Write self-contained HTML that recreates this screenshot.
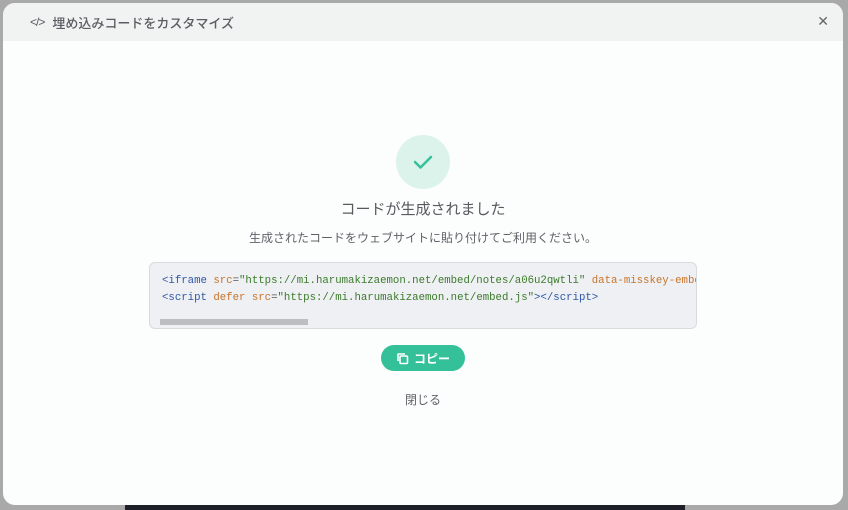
<!DOCTYPE html>
<html><head><meta charset="utf-8"><style>
*{box-sizing:border-box;margin:0;padding:0}
body{width:848px;height:510px;background:#a9a9a9;position:relative;overflow:hidden;font-family:"Liberation Sans","Noto Sans CJK JP",sans-serif}
.darkbar{position:absolute;left:125px;top:500px;width:560px;height:10px;background:#1d2026}
.dlg{position:absolute;left:3px;top:3px;width:840px;height:502px;background:#fcfdfd;border-radius:12px;overflow:hidden}
.hdr{height:38px;background:#f1f2f2;display:flex;align-items:center;padding-left:27px;color:#5a5e63;font-size:13px;font-weight:500}
.hdr .ic{font-size:12px;margin-right:8px;letter-spacing:-1px}
.x{position:absolute;right:14px;top:10px;font-size:14px;color:#666}
.circle{position:absolute;left:393px;top:132px;width:54px;height:54px;border-radius:50%;background:#dcf3ec}
.t1{position:absolute;top:195px;width:100%;text-align:center;font-size:15px;color:#555a5e}
.t2{position:absolute;top:226px;width:100%;text-align:center;font-size:12px;color:#5f6368}
.code{position:absolute;left:146px;top:259px;width:548px;height:67px;background:#eff0f3;border:1px solid #d8dadd;border-radius:6px;overflow:hidden;font-family:"Liberation Mono",monospace;font-size:10.7px;line-height:16.5px;padding:10px 0 0 12px;white-space:nowrap;color:#3b7a2b}
.b{color:#2d57a8}.o{color:#c7742a}.p{color:#555}
.sb{position:absolute;left:10px;bottom:3px;width:148px;height:6px;background:#bdbec1}
.btn{position:absolute;left:378px;top:342px;width:84px;height:26px;border-radius:13px;background:#34c19a;color:#fff;font-size:12px;font-weight:bold;display:flex;align-items:center;justify-content:center;gap:5px}
.close{position:absolute;top:388px;width:100%;text-align:center;font-size:12px;color:#5f6368}
</style></head><body>
<div class="darkbar"></div>
<div class="dlg">
<div class="hdr"><span class="ic">&lt;/&gt;</span>埋め込みコードをカスタマイズ</div>
<div class="x">✕</div>
<div class="circle"><svg width="54" height="54" viewBox="0 0 54 54"><path d="M19 27l5.5 5.5L35 22" stroke="#35c19a" stroke-width="2.5" fill="none" stroke-linecap="round" stroke-linejoin="round"/></svg></div>
<div class="t1">コードが生成されました</div>
<div class="t2">生成されたコードをウェブサイトに貼り付けてご利用ください。</div>
<div class="code"><div><span class="b">&lt;iframe</span> <span class="o">src</span><span class="p">=</span>"https://mi.harumakizaemon.net/embed/notes/a06u2qwtli" <span class="o">data-misskey-embed-id</span></div><div><span class="b">&lt;script</span> <span class="o">defer</span> <span class="o">src</span><span class="p">=</span>"https://mi.harumakizaemon.net/embed.js"<span class="b">&gt;&lt;/script&gt;</span></div><div class="sb"></div></div>
<div class="btn"><svg width="13" height="13" viewBox="0 0 13 13"><rect x="4" y="4" width="7.5" height="7.5" rx="1" stroke="#fff" stroke-width="1.6" fill="none"/><path d="M2 9V2.5A.5.5 0 0 1 2.5 2H9" stroke="#fff" stroke-width="1.6" fill="none"/></svg>コピー</div>
<div class="close">閉じる</div>
</div>
</body></html>
